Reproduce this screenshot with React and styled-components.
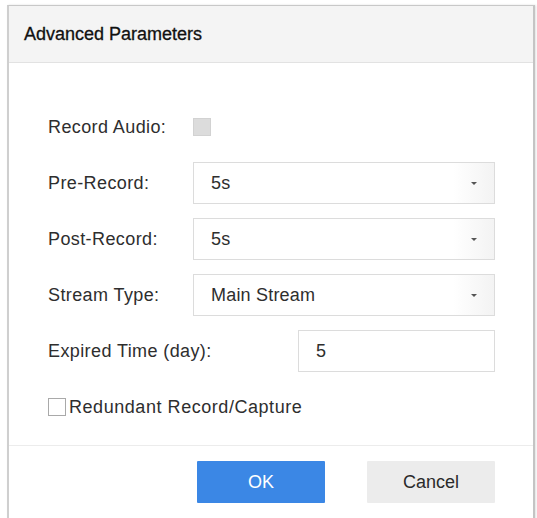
import React from 'react';
import styled, { createGlobalStyle } from 'styled-components';

const GlobalStyle = createGlobalStyle`
  html, body {
    margin: 0;
    padding: 0;
    background: #ffffff;
  }
  body {
    font-family: "Liberation Sans", Arial, sans-serif;
    color: #2e2e2e;
  }
`;

const Page = styled.div`
  padding: 5px 0 0 7px;
`;

const Dialog = styled.div`
  width: 524px;
  border: 1px solid #c8c8c8;
  border-right: 2px solid #c4c4c4;
  border-left: 2px solid #cfcfcf;
  box-shadow: 1px 0 2px rgba(0, 0, 0, 0.12);
  background: #fff;
`;

const Header = styled.div`
  height: 57px;
  display: flex;
  align-items: center;
  padding-left: 15px;
  background: #f4f4f4;
  border-bottom: 1px solid #e2e2e2;
  box-sizing: border-box;
`;

const Title = styled.h2`
  margin: 0;
  font-size: 18px;
  font-weight: normal;
  color: #111;
  -webkit-text-stroke: 0.3px #111;
`;

const Body = styled.div`
  padding: 43px 38px 17px 39px;
  display: flex;
  flex-direction: column;
  gap: 14px;
  border-bottom: 1px solid #ececec;
`;

const Row = styled.div`
  display: flex;
  align-items: center;
  height: 42px;
`;

const Label = styled.label`
  width: ${(p) => p.$width}px;
  flex: none;
  font-size: 18px;
  color: #2e2e2e;
  letter-spacing: 0.4px;
`;

const Select = styled.div`
  flex: 1;
  height: 42px;
  box-sizing: border-box;
  border: 1px solid #dcdcdc;
  display: flex;
  align-items: center;
  font-size: 18px;
  color: #2e2e2e;
`;

const Value = styled.span`
  flex: 1;
  padding-left: 17px;
  letter-spacing: 0.2px;
`;

const Arrow = styled.span`
  width: 41px;
  align-self: stretch;
  display: flex;
  align-items: center;
  justify-content: center;
  background: linear-gradient(to right, #ffffff, #f3f3f3);
  &::after {
    content: '';
    width: 0;
    height: 0;
    border-left: 3px solid transparent;
    border-right: 3px solid transparent;
    border-top: 3px solid #555;
  }
`;

const Input = styled.div`
  flex: 1;
  height: 42px;
  box-sizing: border-box;
  border: 1px solid #dcdcdc;
  display: flex;
  align-items: center;
  padding-left: 17px;
  font-size: 18px;
  color: #2e2e2e;
`;

const Box = styled.span`
  width: 18px;
  height: 18px;
  box-sizing: border-box;
  flex: none;
  border: 1px solid ${(p) => (p.$disabled ? '#d2d2d2' : '#a9a9a9')};
  background: ${(p) => (p.$disabled ? '#dcdcdc' : '#fff')};
`;

const CheckText = styled.span`
  margin-left: 3px;
  font-size: 18px;
  color: #2e2e2e;
  letter-spacing: 0.55px;
`;

const Footer = styled.div`
  display: flex;
  justify-content: flex-end;
  gap: 42px;
  padding: 15px 38px 20px 0;
`;

const Button = styled.button`
  width: 128px;
  height: 42px;
  border: 0;
  border-radius: 1px;
  font-family: "Liberation Sans", Arial, sans-serif;
  font-size: 18px;
  cursor: pointer;
  background: ${(p) => (p.$primary ? '#3b87e5' : '#ececec')};
  color: ${(p) => (p.$primary ? '#ffffff' : '#2a2a2a')};
`;

const selects = [
  { label: 'Pre-Record:', value: '5s' },
  { label: 'Post-Record:', value: '5s' },
  { label: 'Stream Type:', value: 'Main Stream' },
];

export default function App() {
  return (
    <Page>
      <GlobalStyle />
      <Dialog>
        <Header>
          <Title>Advanced Parameters</Title>
        </Header>
        <Body>
          <Row>
            <Label $width={145}>Record Audio:</Label>
            <Box $disabled />
          </Row>
          {selects.map((s) => (
            <Row key={s.label}>
              <Label $width={145}>{s.label}</Label>
              <Select>
                <Value>{s.value}</Value>
                <Arrow />
              </Select>
            </Row>
          ))}
          <Row>
            <Label $width={250}>Expired Time (day):</Label>
            <Input>5</Input>
          </Row>
          <Row>
            <Box />
            <CheckText>Redundant Record/Capture</CheckText>
          </Row>
        </Body>
        <Footer>
          <Button $primary>OK</Button>
          <Button>Cancel</Button>
        </Footer>
      </Dialog>
    </Page>
  );
}
